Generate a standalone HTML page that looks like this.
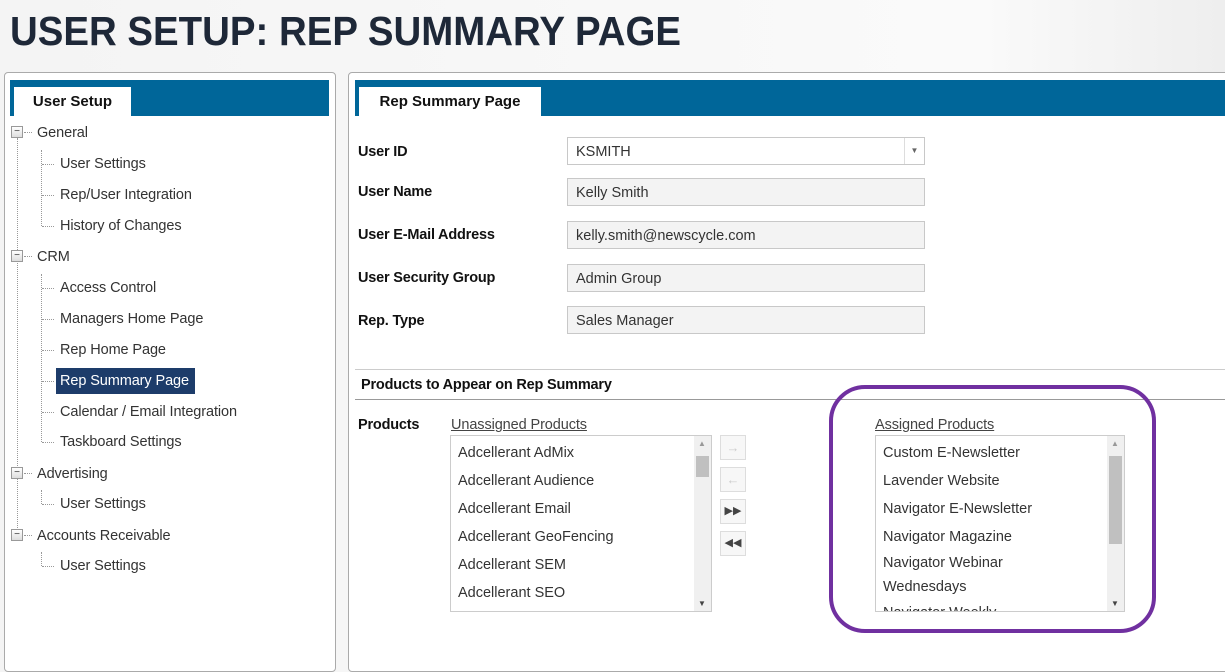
<!DOCTYPE html>
<html><head><style>
*{margin:0;padding:0;box-sizing:border-box}
body{width:1225px;height:654px;overflow:hidden;background:linear-gradient(90deg,#f4f4f4,#fafafa 80%,#eee);font-family:"Liberation Sans",sans-serif;color:#333;position:relative}
.a{position:absolute}
h1{position:absolute;left:10px;top:8px;font-size:41px;font-weight:bold;color:#1e2838;white-space:nowrap;transform:scaleX(0.937);transform-origin:left}
.panel{position:absolute;background:#fff;border:1px solid #aaa;border-radius:4px}
.bar{position:absolute;background:#006699;height:36px}
.tab{position:absolute;background:#fff;height:29px;font-weight:bold;font-size:15px;color:#111;text-align:center;line-height:29px}
.t{position:absolute;font-size:14.5px;color:#333;white-space:nowrap;letter-spacing:-0.1px;margin-top:1px}
.lbl{position:absolute;left:358px;font-weight:bold;font-size:14.5px;color:#111;letter-spacing:-0.2px;margin-top:1px}
.in{position:absolute;left:567px;width:358px;height:28px;border:1px solid #c8c8c8;background:#f3f3f3;font-size:14.5px;padding-left:8px;line-height:28px;color:#333}
.box{position:absolute;border:1px solid #ccc;background:#fff;overflow:hidden}
.box div{font-size:14.5px;color:#333;padding-left:7px;height:28px;line-height:28px;white-space:nowrap}
.sb{position:absolute;right:0;top:0;bottom:0;width:17px;background:#f0f0f0}
.btn{position:absolute;left:720px;width:26px;height:25px;border:1px solid #ddd;background:#f7f7f7;font-size:11px;text-align:center;line-height:23px;color:#444}
.pm{position:absolute;left:11px;width:12px;height:12px;border:1px solid #999;background:linear-gradient(#fff,#ddd);font-size:10px;line-height:9px;text-align:center;color:#333}
.vd{position:absolute;border-left:1px dotted #999}
.hd{position:absolute;border-top:1px dotted #999;width:12px}
</style></head><body>
<h1>USER SETUP: REP SUMMARY PAGE</h1>
<div class="panel" style="left:4px;top:72px;width:332px;height:600px"></div>
<div class="bar" style="left:10px;top:80px;width:319px"></div>
<div class="tab" style="left:14px;top:87px;width:117px">User Setup</div>
<div class="panel" style="left:348px;top:72px;width:890px;height:600px"></div>
<div class="bar" style="left:355px;top:80px;width:870px"></div>
<div class="tab" style="left:359px;top:87px;width:182px">Rep Summary Page</div>

<div class="vd" style="left:17px;top:138px;height:400px"></div>
<div class="vd" style="left:41px;top:150px;height:76px"></div>
<div class="vd" style="left:41px;top:274px;height:168px"></div>
<div class="vd" style="left:41px;top:490px;height:14px"></div>
<div class="vd" style="left:41px;top:552px;height:14px"></div>
<div class="pm" style="top:126px">−</div><div class="hd" style="left:24px;top:132px;width:8px"></div><div class="t" style="left:37px;top:124px">General</div>
<div class="hd" style="left:42px;top:164px"></div><div class="t" style="left:60px;top:155px">User Settings</div>
<div class="hd" style="left:42px;top:195px"></div><div class="t" style="left:60px;top:186px">Rep/User Integration</div>
<div class="hd" style="left:42px;top:226px"></div><div class="t" style="left:60px;top:217px">History of Changes</div>
<div class="pm" style="top:250px">−</div><div class="hd" style="left:24px;top:256px;width:8px"></div><div class="t" style="left:37px;top:248px">CRM</div>
<div class="hd" style="left:42px;top:288px"></div><div class="t" style="left:60px;top:279px">Access Control</div>
<div class="hd" style="left:42px;top:319px"></div><div class="t" style="left:60px;top:310px">Managers Home Page</div>
<div class="hd" style="left:42px;top:350px"></div><div class="t" style="left:60px;top:341px">Rep Home Page</div>
<div class="hd" style="left:42px;top:381px"></div><div class="a" style="left:56px;top:368px;width:139px;height:26px;background:#1d3c6a"></div><div class="t" style="left:60px;top:372px;color:#fff">Rep Summary Page</div>
<div class="hd" style="left:42px;top:412px"></div><div class="t" style="left:60px;top:403px">Calendar / Email Integration</div>
<div class="hd" style="left:42px;top:442px"></div><div class="t" style="left:60px;top:433px">Taskboard Settings</div>
<div class="pm" style="top:467px">−</div><div class="hd" style="left:24px;top:473px;width:8px"></div><div class="t" style="left:37px;top:465px">Advertising</div>
<div class="hd" style="left:42px;top:504px"></div><div class="t" style="left:60px;top:495px">User Settings</div>
<div class="pm" style="top:529px">−</div><div class="hd" style="left:24px;top:535px;width:8px"></div><div class="t" style="left:37px;top:527px">Accounts Receivable</div>
<div class="hd" style="left:42px;top:566px"></div><div class="t" style="left:60px;top:557px">User Settings</div>

<div class="lbl" style="top:143px">User ID</div>
<div class="lbl" style="top:183px">User Name</div>
<div class="lbl" style="top:226px">User E-Mail Address</div>
<div class="lbl" style="top:269px">User Security Group</div>
<div class="lbl" style="top:312px">Rep. Type</div>
<div class="in" style="top:137px;background:#fff">KSMITH<span style="position:absolute;right:0;top:0;width:20px;height:26px;border-left:1px solid #ddd;font-size:8px;line-height:26px;text-align:center;color:#666">▼</span></div>
<div class="in" style="top:178px">Kelly Smith</div>
<div class="in" style="top:221px">kelly.smith@newscycle.com</div>
<div class="in" style="top:264px">Admin Group</div>
<div class="in" style="top:306px">Sales Manager</div>

<div class="a" style="left:355px;top:369px;width:870px;height:31px;border-top:1px solid #ccc;border-bottom:1px solid #999"></div>
<div class="lbl" style="left:361px;top:376px">Products to Appear on Rep Summary</div>
<div class="lbl" style="top:416px">Products</div>
<div class="t" style="left:451px;top:416px;text-decoration:underline;color:#444">Unassigned Products</div>
<div class="t" style="left:875px;top:416px;text-decoration:underline;color:#444">Assigned Products</div>
<div class="box" style="left:450px;top:435px;width:262px;height:177px;padding-top:3px">
<div>Adcellerant AdMix</div><div>Adcellerant Audience</div><div>Adcellerant Email</div><div>Adcellerant GeoFencing</div><div>Adcellerant SEM</div><div>Adcellerant SEO</div>
<span class="sb"><span class="a" style="left:4px;top:3px;font-size:8px;color:#999">▲</span><span class="a" style="left:2px;top:20px;width:13px;height:21px;background:#c0c0c0"></span><span class="a" style="left:4px;bottom:3px;font-size:8px;color:#444">▼</span></span></div>
<div class="btn" style="top:435px;color:#ccc;font-size:13px">→</div>
<div class="btn" style="top:467px;color:#ccc;font-size:13px">←</div>
<div class="btn" style="top:499px">▶▶</div>
<div class="btn" style="top:531px">◀◀</div>
<div class="box" style="left:875px;top:435px;width:250px;height:177px;padding-top:3px">
<div>Custom E-Newsletter</div><div>Lavender Website</div><div>Navigator E-Newsletter</div><div>Navigator Magazine</div><div style="height:auto;line-height:24px">Navigator Webinar<br>Wednesdays</div><div>Navigator Weekly</div>
<span class="sb"><span class="a" style="left:4px;top:3px;font-size:8px;color:#999">▲</span><span class="a" style="left:2px;top:20px;width:13px;height:88px;background:#c0c0c0"></span><span class="a" style="left:4px;bottom:3px;font-size:8px;color:#444">▼</span></span></div>
<div class="a" style="left:829px;top:385px;width:327px;height:248px;border:4px solid #7030a0;border-radius:36px"></div>
</body></html>
